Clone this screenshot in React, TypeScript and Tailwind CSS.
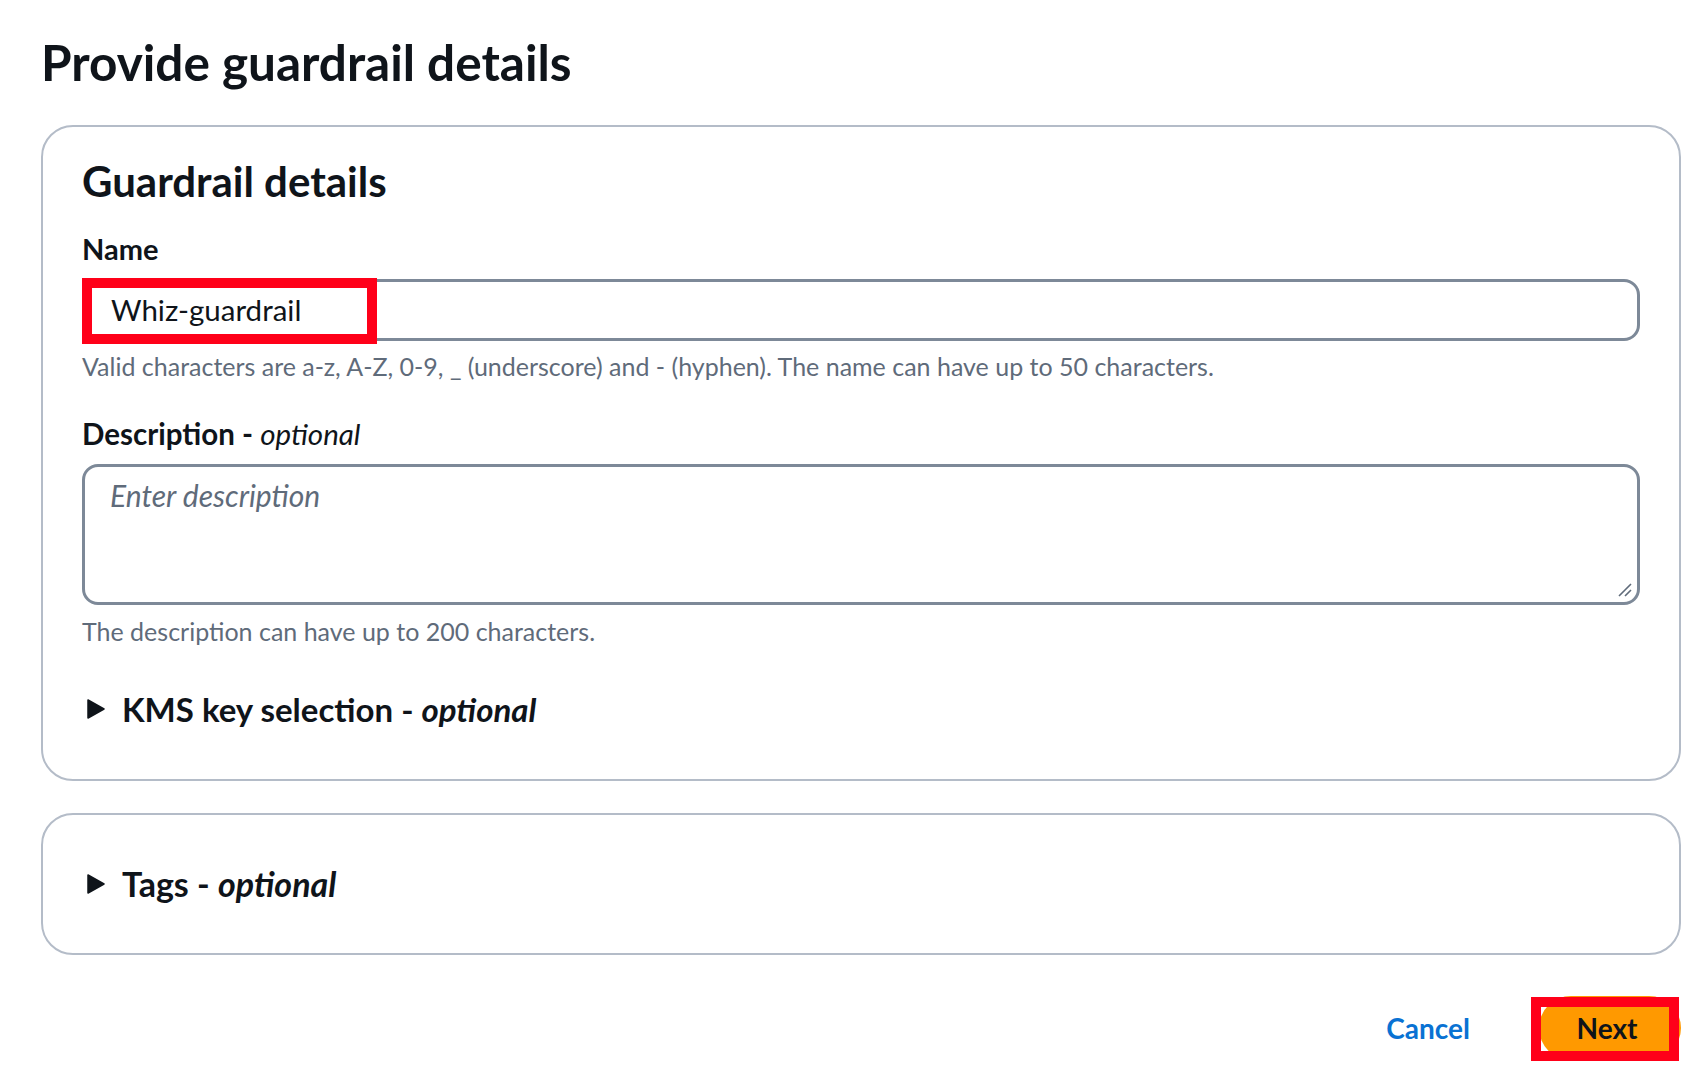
import React from "react";

function Caret(){
  return(
    <svg width="18" height="20" viewBox="0 0 18 20" className="shrink-0">
      <path d="M1 1 L17 10 L1 19 Z" fill="#0f141a" stroke="#0f141a" strokeWidth="1.5" strokeLinejoin="round"/>
    </svg>
  )
}

function ExpandRow(props: {title: string, size: string}){
  return(
    <div className="flex items-center h-[44px] pl-[5px]">
      <Caret/>
      <div className={`ml-[17px] leading-[44px] font-bold text-[#0f141a] ${props.size}`}>
        {props.title} - <i>optional</i>
      </div>
    </div>
  )
}

export default function App(){
  return(
    <div className="min-h-screen w-full bg-white pl-[41px] pr-[17px] pt-[34px] pb-[20px] font-['Lato',sans-serif] text-[#0f141a]">
      <h1 className="text-[49.5px] leading-[56px] font-bold">Provide guardrail details</h1>

      <div className="mt-[35px] rounded-[32px] border-2 border-[#b4bcc8] px-[39px] pt-[30px] pb-[48px]">
        <h2 className="text-[42px] leading-[48px] font-bold">Guardrail details</h2>

        <div className="mt-[26px] text-[29px] leading-[36px] font-bold">Name</div>
        <div className="relative mt-[12px]">
          <div className="h-[62px] w-full flex items-center rounded-[16px] border-[3px] border-[#7d8998] px-[26px] text-[29.5px] leading-[36px]">
            Whiz-guardrail
          </div>
          <div className="absolute left-0 top-[-1px] w-[295px] h-[66px] border-[10px] border-[#ff0019]"></div>
        </div>
        <div className="mt-[9px] text-[25px] leading-[32px] text-[#5f6b7a]">
          Valid characters are a-z, A-Z, 0-9, _ (underscore) and - (hyphen). The name can have up to 50 characters.
        </div>

        <div className="mt-[34px] text-[29.5px] leading-[36px]">
          <span className="font-bold">Description - </span><i>optional</i>
        </div>
        <div className="relative mt-[12px] h-[141px] rounded-[16px] border-[3px] border-[#7d8998] px-[25px] pt-[10px]">
          <div className="text-[30px] leading-[36px] italic text-[#5f6b7a]">Enter description</div>
          <svg width="16" height="16" viewBox="0 0 16 16" className="absolute right-[4px] bottom-[4px]">
            <path d="M2 14 L14 2 M8 14 L14 8" stroke="#5f6b7a" strokeWidth="1.6"/>
          </svg>
        </div>
        <div className="mt-[10px] text-[25px] leading-[32px] text-[#5f6b7a]">
          The description can have up to 200 characters.
        </div>

        <div className="mt-[40px]">
          <ExpandRow title="KMS key selection" size="text-[33px]"/>
        </div>
      </div>

      <div className="mt-[32px] rounded-[32px] border-2 border-[#b4bcc8] px-[39px] pt-[47px] pb-[47px]">
        <ExpandRow title="Tags" size="text-[34px]"/>
      </div>

      <div className="mt-[41px] flex items-center justify-end">
        <button className="mr-[69px] text-[28px] leading-[36px] font-bold text-[#0972d3]">Cancel</button>
        <div className="relative">
          <button className="h-[64px] w-[142px] rounded-full bg-[#ff9900] text-[28px] leading-[36px] font-bold text-[#0f141a] pr-[6px]">Next</button>
          <div className="absolute left-[-8px] top-[1px] w-[148px] h-[64px] border-[10px] border-[#ff0019]"></div>
        </div>
      </div>
    </div>
  )
}
